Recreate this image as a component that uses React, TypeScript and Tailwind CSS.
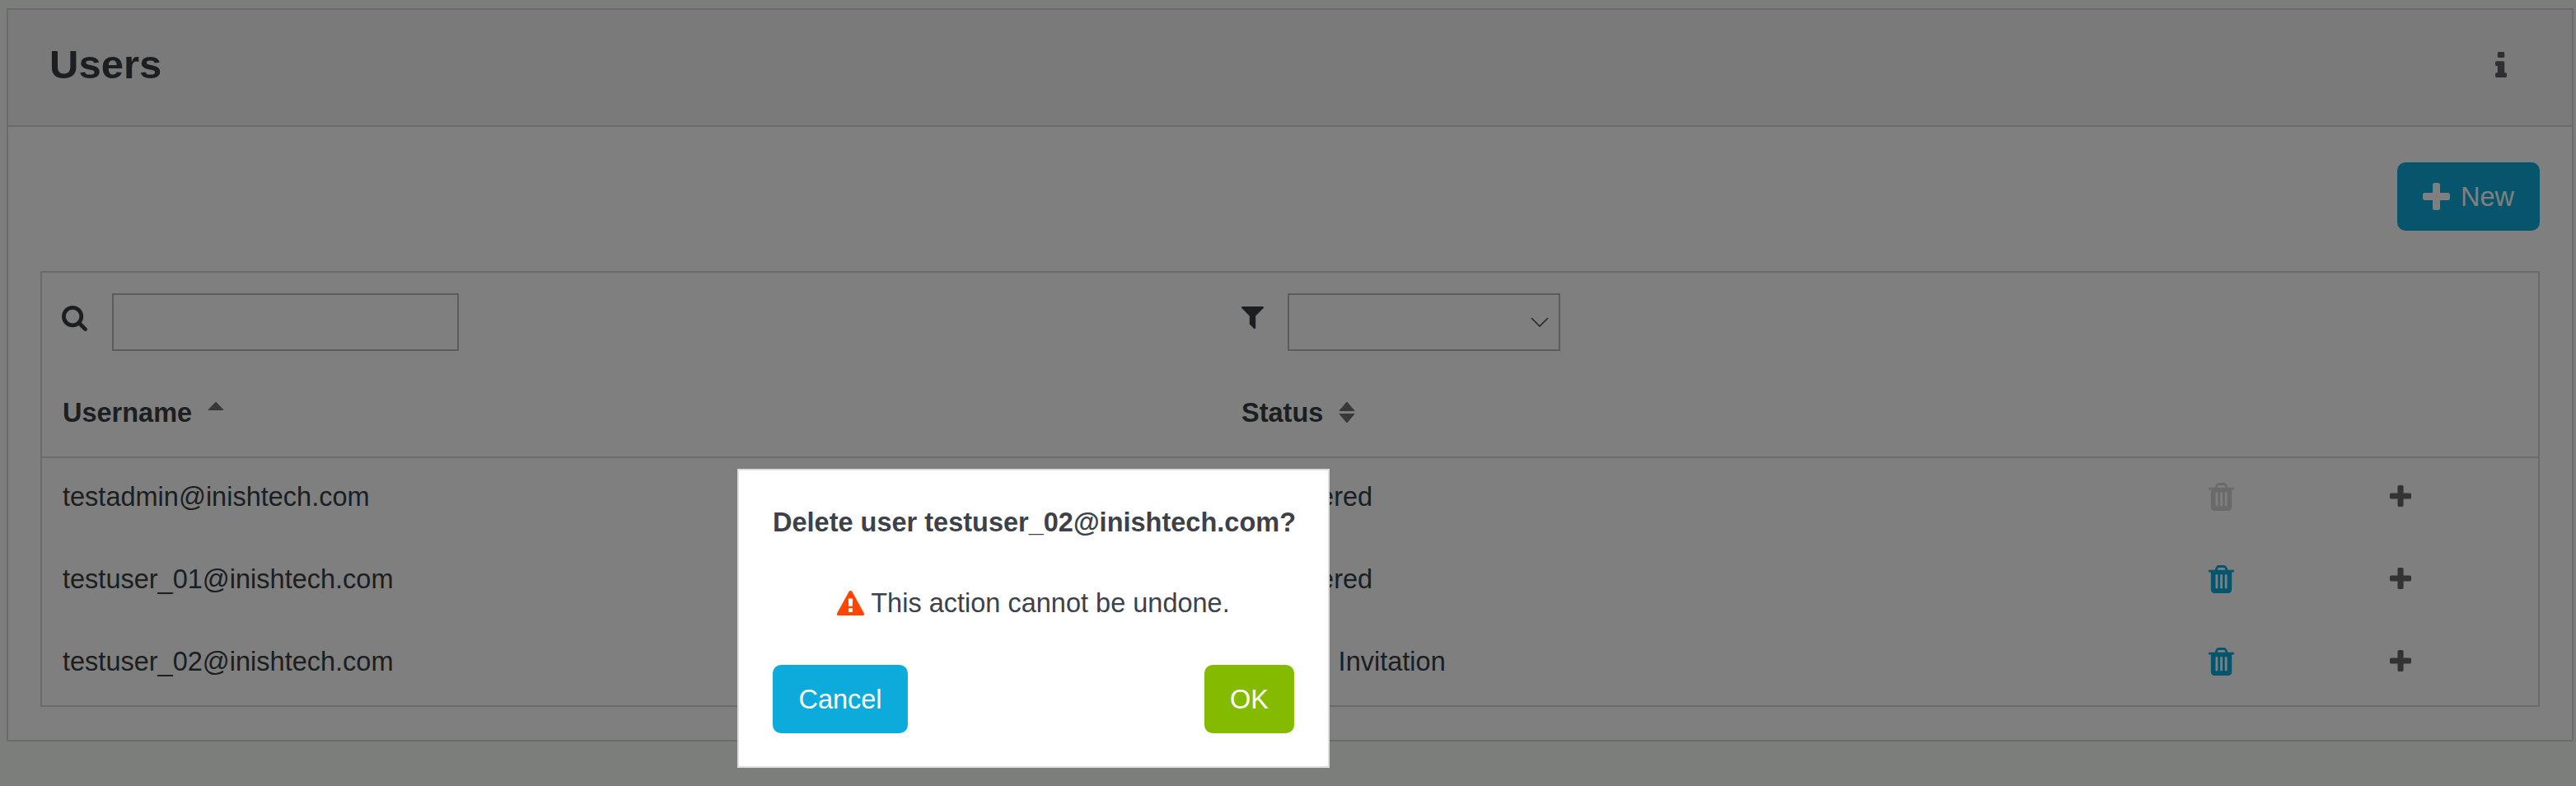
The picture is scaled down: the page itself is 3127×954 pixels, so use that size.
const users = [
  { name: "testadmin@inishtech.com", status: "Registered", canDelete: false },
  { name: "testuser_01@inishtech.com", status: "Registered", canDelete: true },
  { name: "testuser_02@inishtech.com", status: "Manual Invitation", canDelete: true },
];

function TrashIcon({ className }: { className: string }) {
  return (
    <svg viewBox="0 0 1408 1536" fill="currentColor" className={className}>
      <path d="M512 1248v-704q0-14-9-23t-23-9h-64q-14 0-23 9t-9 23v704q0 14 9 23t23 9h64q14 0 23-9t9-23zm256 0v-704q0-14-9-23t-23-9h-64q-14 0-23 9t-9 23v704q0 14 9 23t23 9h64q14 0 23-9t9-23zm256 0v-704q0-14-9-23t-23-9h-64q-14 0-23 9t-9 23v704q0 14 9 23t23 9h64q14 0 23-9t9-23zm-544-992h448l-48-117q-7-9-17-11h-317q-10 2-17 11zm928 32v64q0 14-9 23t-23 9h-96v948q0 83-47 143.5t-113 60.5h-832q-66 0-113-58.5t-47-141.5v-952h-96q-14 0-23-9t-9-23v-64q0-14 9-23t23-9h309l70-167q15-37 54-63t79-26h320q40 0 79 26t54 63l70 167h309q14 0 23 9t9 23z" />
    </svg>
  );
}

function PlusIcon({ className }: { className: string }) {
  return (
    <svg viewBox="0 128 1408 1408" fill="currentColor" className={className}>
      <path d="M1408 736v192q0 40-28 68t-68 28h-416v416q0 40-28 68t-68 28h-192q-40 0-68-28t-28-68v-416h-416q-40 0-68-28t-28-68v-192q0-40 28-68t68-28h416v-416q0-40 28-68t68-28h192q40 0 68 28t28 68v416h416q40 0 68 28t28 68z" />
    </svg>
  );
}

function SearchIcon({ className }: { className: string }) {
  return (
    <svg viewBox="0 0 1664 1664" fill="currentColor" className={className}>
      <path d="M1152 704q0-185-131.5-316.5t-316.5-131.5-316.5 131.5-131.5 316.5 131.5 316.5 316.5 131.5 316.5-131.5 131.5-316.5zm512 832q0 52-38 90t-90 38q-54 0-90-38l-343-342q-179 124-399 124-143 0-273.5-55.5t-225-150-150-225-55.5-273.5 55.5-273.5 150-225 225-150 273.5-55.5 273.5 55.5 225 150 150 225 55.5 273.5q0 220-124 399l343 343q37 37 37 90z" />
    </svg>
  );
}

function FilterIcon({ className }: { className: string }) {
  return (
    <svg viewBox="192 256 1408 1408" fill="currentColor" className={className}>
      <path d="M1595 295q17 41-14 70l-493 493v742q0 42-39 59-13 5-25 5-27 0-45-19l-256-256q-19-19-19-45v-486l-493-493q-31-29-14-70 17-39 59-39h1280q42 0 59 39z" />
    </svg>
  );
}

function InfoIcon({ className }: { className: string }) {
  return (
    <svg viewBox="576 128 640 1408" fill="currentColor" className={className}>
      <path d="M1216 1344v128q0 26-19 45t-45 19h-512q-26 0-45-19t-19-45v-128q0-26 19-45t45-19h64v-384h-64q-26 0-45-19t-19-45v-128q0-26 19-45t45-19h384q26 0 45 19t19 45v576h64q26 0 45 19t19 45zm-128-1152v192q0 26-19 45t-45 19h-256q-26 0-45-19t-19-45v-192q0-26 19-45t45-19h256q26 0 45 19t19 45z" />
    </svg>
  );
}

function WarningIcon({ className }: { className: string }) {
  return (
    <svg viewBox="0 0 1792 1632" fill="currentColor" className={className}>
      <path d="M1024 1375v-190q0-14-9.5-23.5t-22.5-9.5h-192q-13 0-22.5 9.5t-9.5 23.5v190q0 14 9.5 23.5t22.5 9.5h192q13 0 22.5-9.5t9.5-23.5zm-2-374l18-459q0-12-10-19-13-11-24-11h-220q-11 0-24 11-10 7-10 21l17 457q0 10 10 16.5t24 6.5h185q14 0 23.5-6.5t10.5-16.5zm-14-934l768 1408q35 63-2 126-17 29-46.5 46t-63.5 17h-1536q-34 0-63.5-17t-46.5-46q-37-63-2-126l768-1408q17-31 47-49t65-18 65 18 47 49z" />
    </svg>
  );
}

export default function App() {
  return (
    <div className="relative h-[954px] overflow-hidden bg-[#f9fcf9] pt-[10px] pl-[8px] pr-[3px] font-['Liberation_Sans',Arial,sans-serif] text-[32.5px] leading-[48px] text-[#383e44]">
      <div className="border-2 border-[#d7d7d7] bg-white">
        {/* Header */}
        <div className="flex h-[142px] items-center justify-between border-b-2 border-[#d7d7d7] bg-[#f5f5f5] pr-[79px] pb-[8px] pl-[50px]">
          <h1 className="text-[49px] font-bold">Users</h1>
          <InfoIcon className="h-[31px] w-[14px] text-[#5a5e62]" />
        </div>

        {/* Body */}
        <div className="px-[39px] pt-[43px] pb-[40px]">
          <div className="flex justify-end">
            <button className="flex h-[83px] w-[173px] items-center justify-center gap-[13px] rounded-[10px] bg-[#0ea9db] text-white">
              <PlusIcon className="h-[33px] w-[33px]" />
              New
            </button>
          </div>

          <div className="mt-[49px] border-2 border-[#d7d7d7]">
            {/* Filters */}
            <div className="grid h-[121px] grid-cols-[1432px_1fr] pt-[25px]">
              <div className="flex items-start pl-[24px]">
                <SearchIcon className="mt-[15px] h-[31px] w-[31px] text-[#383e44]" />
                <input className="ml-[30px] h-[70px] w-[421px] border-2 border-[#b8b8b8] bg-white" />
              </div>
              <div className="flex items-start pl-[24px]">
                <FilterIcon className="mt-[16px] h-[27px] w-[27px] text-[#383e44]" />
                <div className="ml-[29px] flex h-[70px] w-[331px] items-center justify-end border-2 border-[#b8b8b8] bg-white pr-[12px]">
                  <svg viewBox="0 0 22 12" fill="none" stroke="#444" strokeWidth="1.5" className="h-[12px] w-[22px]">
                    <path d="M1 1l10 10L21 1" />
                  </svg>
                </div>
              </div>
            </div>

            {/* Column headers */}
            <div className="grid h-[104px] grid-cols-[1432px_1fr] border-b-2 border-[#d7d7d7] pt-[23px] font-bold">
              <div className="flex items-start pl-[25px]">
                <span className="leading-[52px]">Username</span>
                <svg viewBox="0 0 20 11" fill="#707070" stroke="#707070" strokeWidth="1" strokeLinejoin="round" className="mt-[12px] ml-[19px] h-[11px] w-[20px]">
                  <path d="M10 1l9 9.500H1z" />
                </svg>
              </div>
              <div className="flex items-start pl-[24px]">
                <span className="leading-[52px]">Status</span>
                <svg viewBox="0 0 20 27" fill="#707070" stroke="#707070" strokeWidth="1" strokeLinejoin="round" className="mt-[12px] ml-[19px] h-[27px] w-[20px]">
                  <path d="M10 1l9 10.500H1zM10 26l9-10.500H1z" />
                </svg>
              </div>
            </div>

            {/* Rows */}
            {users.map((user) => (
              <div key={user.name} className="grid h-[100px] grid-cols-[1432px_1105px_217px_217px_1fr] items-center">
                <div className="pb-[6px] pl-[25px]">{user.name}</div>
                <div className="pb-[6px] pl-[26px] whitespace-nowrap">{user.status}</div>
                <div className="flex justify-center pb-[6px]">
                  <TrashIcon className={`h-[34px] w-[31px] ${user.canDelete ? "text-[#0ea9db]" : "text-[#d4d4d4]"}`} />
                </div>
                <div className="flex justify-center pb-[8px]">
                  <PlusIcon className="h-[26px] w-[26px] text-[#666]" />
                </div>
                <div />
              </div>
            ))}
          </div>
        </div>
      </div>

      {/* Overlay */}
      <div className="absolute inset-0 bg-black/50" />

      {/* Confirm dialog */}
      <div className="absolute top-[569px] left-[895px] flex h-[363px] w-[719px] flex-col border-2 border-[#ddd] bg-white px-[41px] text-[#3d4249]">
        <div className="mt-[39px] text-center font-bold whitespace-nowrap">Delete user testuser_02@inishtech.com?</div>
        <div className="mt-[50px] flex items-center justify-center gap-[8px]">
          <WarningIcon className="h-[30px] w-[33px] text-[#ff4500]" />
          This action cannot be undone.
        </div>
        <div className="mt-[51px] flex justify-between">
          <button className="h-[83px] w-[164px] rounded-[10px] bg-[#0dabdc] text-white">Cancel</button>
          <button className="h-[83px] w-[109px] rounded-[10px] bg-[#84bb00] text-white">OK</button>
        </div>
      </div>
    </div>
  );
}
